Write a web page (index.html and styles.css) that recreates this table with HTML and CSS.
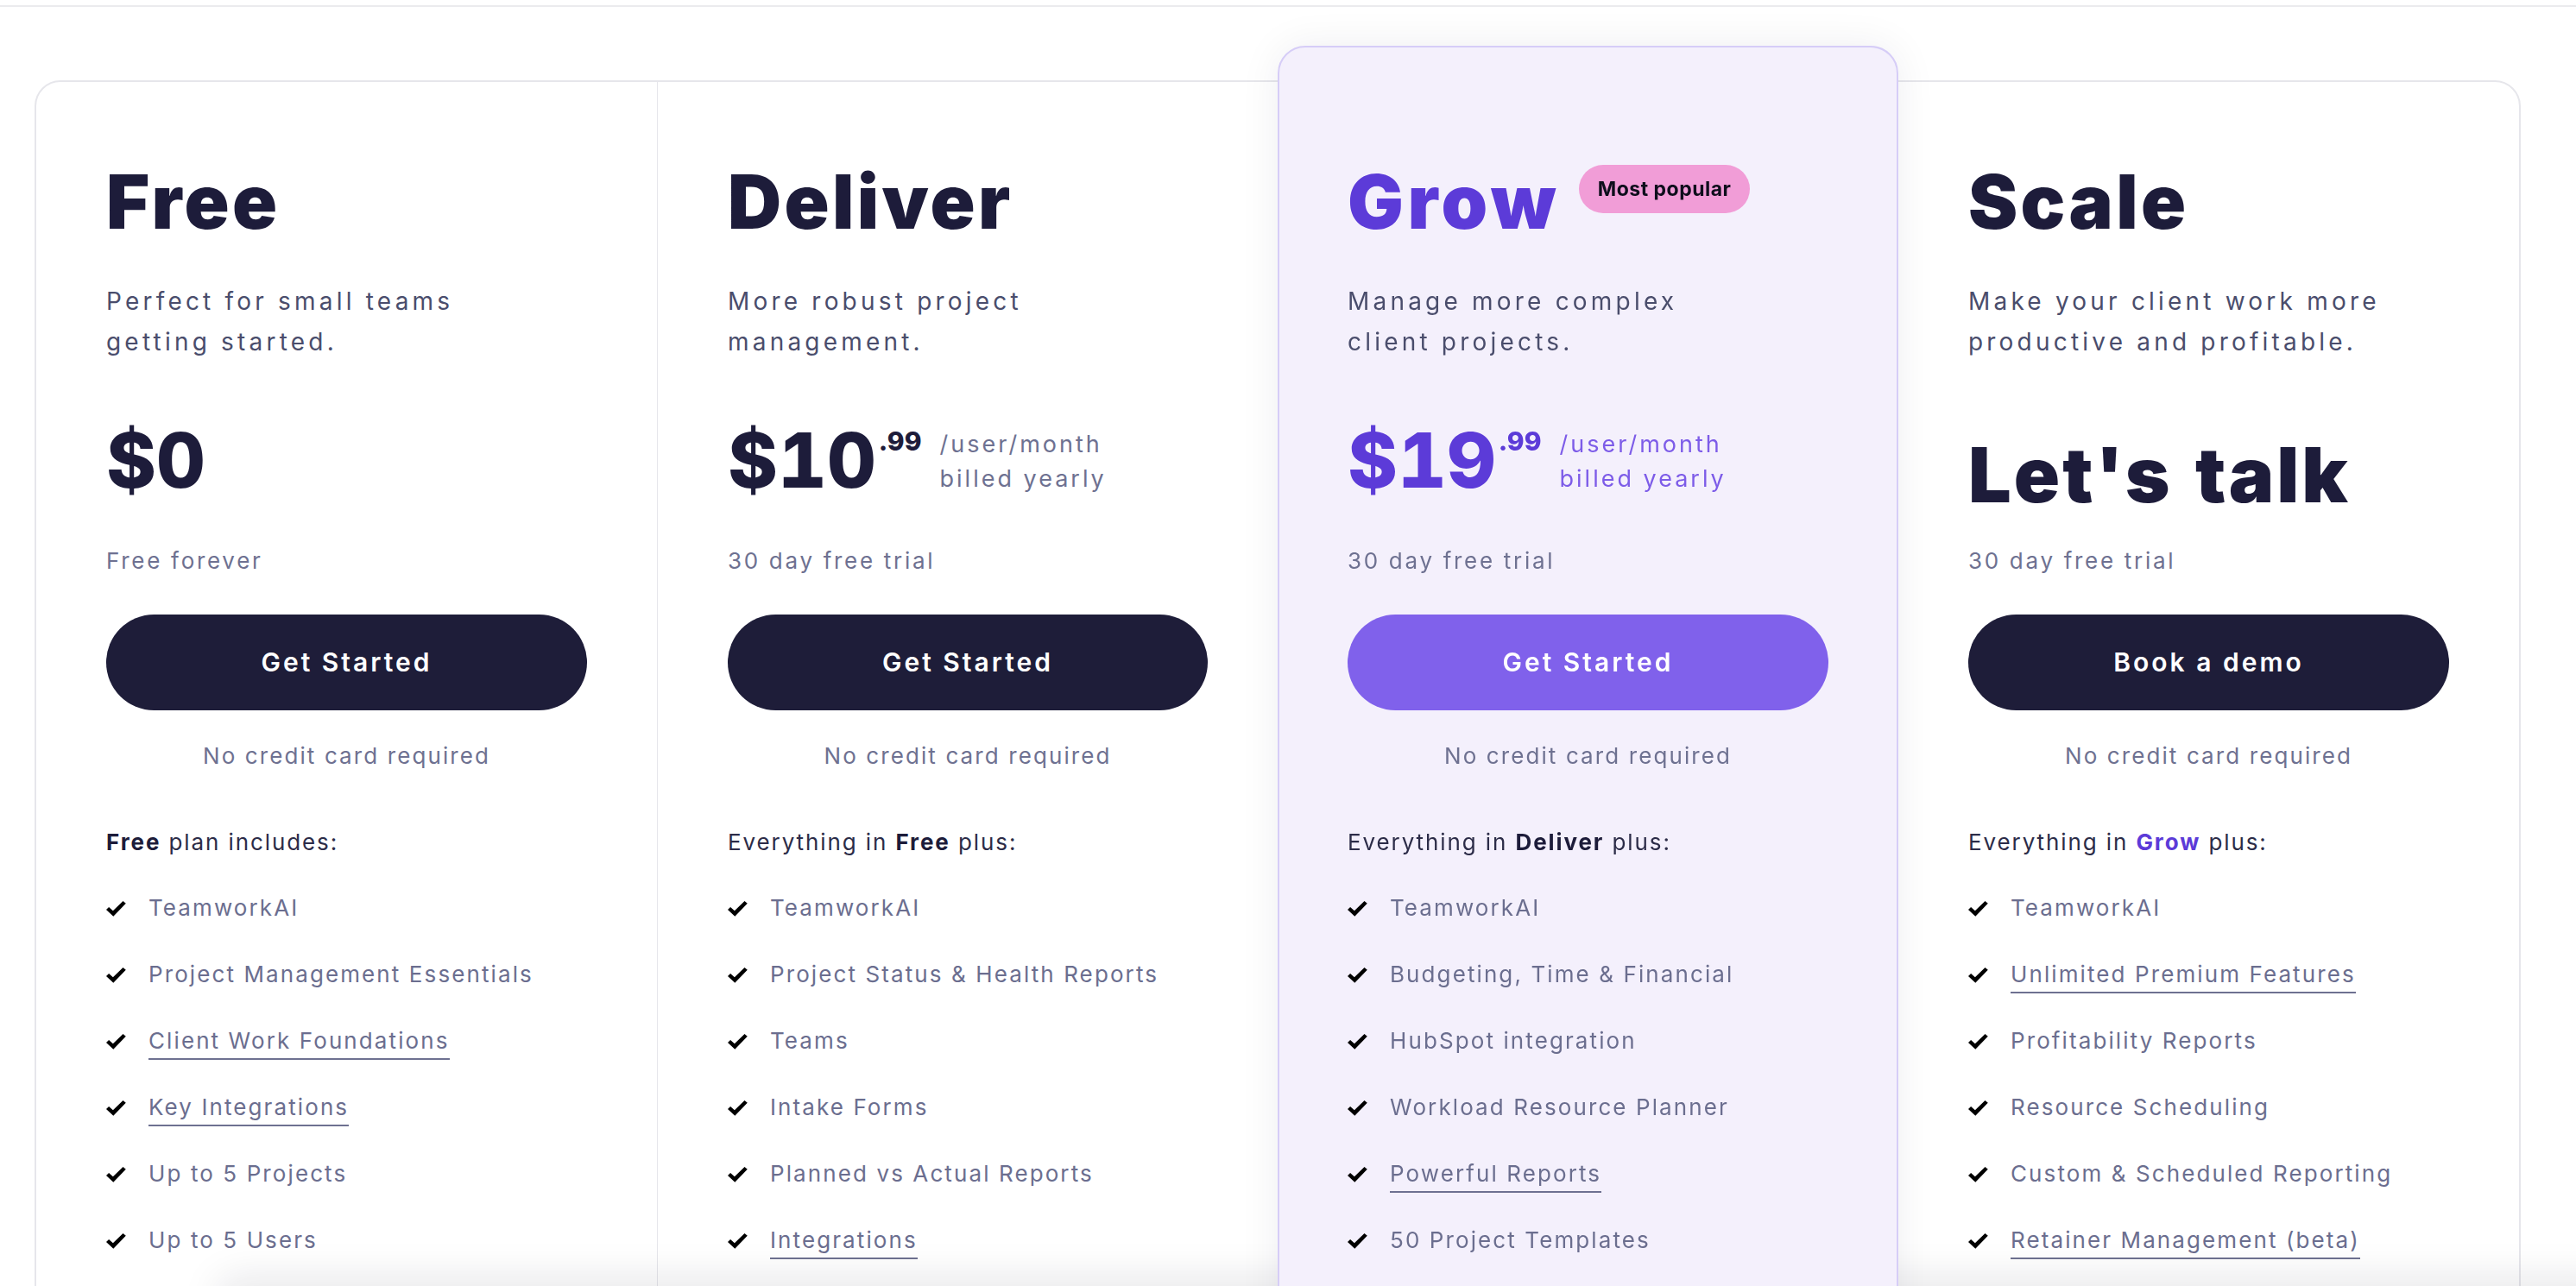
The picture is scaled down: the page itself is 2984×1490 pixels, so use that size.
FILE: index.html
```html
<!DOCTYPE html>
<html lang="en">
<head>
<meta charset="utf-8">
<title>Pricing</title>
<link rel="stylesheet" href="styles.css">
</head>
<body>
<div class="topbar"></div>
<main class="page">
  <section class="plans">
    <article class="plan">
      <div class="plan-head"><h2 class="plan-name">Free</h2></div>
      <p class="plan-desc">Perfect for small teams<br>getting started.</p>
      <div class="price-row"><span class="price">$0</span></div>
      <p class="price-note">Free forever</p>
      <a class="btn btn-dark" href="#">Get Started</a>
      <p class="no-cc">No credit card required</p>
      <p class="includes"><b>Free</b> plan includes:</p>
      <ul class="features">
        <li><svg class="check" viewBox="0 0 23 18"><polygon points="0,9.9 3.1,7 7.9,11.3 19.5,0 22.8,2.8 8.3,17.8"/></svg><span>TeamworkAI</span></li>
        <li><svg class="check" viewBox="0 0 23 18"><polygon points="0,9.9 3.1,7 7.9,11.3 19.5,0 22.8,2.8 8.3,17.8"/></svg><span>Project Management Essentials</span></li>
        <li><svg class="check" viewBox="0 0 23 18"><polygon points="0,9.9 3.1,7 7.9,11.3 19.5,0 22.8,2.8 8.3,17.8"/></svg><span class="link">Client Work Foundations</span></li>
        <li><svg class="check" viewBox="0 0 23 18"><polygon points="0,9.9 3.1,7 7.9,11.3 19.5,0 22.8,2.8 8.3,17.8"/></svg><span class="link">Key Integrations</span></li>
        <li><svg class="check" viewBox="0 0 23 18"><polygon points="0,9.9 3.1,7 7.9,11.3 19.5,0 22.8,2.8 8.3,17.8"/></svg><span>Up to 5 Projects</span></li>
        <li><svg class="check" viewBox="0 0 23 18"><polygon points="0,9.9 3.1,7 7.9,11.3 19.5,0 22.8,2.8 8.3,17.8"/></svg><span>Up to 5 Users</span></li>
      </ul>
    </article>

    <article class="plan plan-divided">
      <div class="plan-head"><h2 class="plan-name">Deliver</h2></div>
      <p class="plan-desc">More robust project<br>management.</p>
      <div class="price-row"><span class="price">$10</span><span class="cents">.99</span><span class="per">/user/month<br>billed yearly</span></div>
      <p class="price-note">30 day free trial</p>
      <a class="btn btn-dark" href="#">Get Started</a>
      <p class="no-cc">No credit card required</p>
      <p class="includes">Everything in <b>Free</b> plus:</p>
      <ul class="features">
        <li><svg class="check" viewBox="0 0 23 18"><polygon points="0,9.9 3.1,7 7.9,11.3 19.5,0 22.8,2.8 8.3,17.8"/></svg><span>TeamworkAI</span></li>
        <li><svg class="check" viewBox="0 0 23 18"><polygon points="0,9.9 3.1,7 7.9,11.3 19.5,0 22.8,2.8 8.3,17.8"/></svg><span>Project Status &amp; Health Reports</span></li>
        <li><svg class="check" viewBox="0 0 23 18"><polygon points="0,9.9 3.1,7 7.9,11.3 19.5,0 22.8,2.8 8.3,17.8"/></svg><span>Teams</span></li>
        <li><svg class="check" viewBox="0 0 23 18"><polygon points="0,9.9 3.1,7 7.9,11.3 19.5,0 22.8,2.8 8.3,17.8"/></svg><span>Intake Forms</span></li>
        <li><svg class="check" viewBox="0 0 23 18"><polygon points="0,9.9 3.1,7 7.9,11.3 19.5,0 22.8,2.8 8.3,17.8"/></svg><span>Planned vs Actual Reports</span></li>
        <li><svg class="check" viewBox="0 0 23 18"><polygon points="0,9.9 3.1,7 7.9,11.3 19.5,0 22.8,2.8 8.3,17.8"/></svg><span class="link">Integrations</span></li>
      </ul>
    </article>

    <article class="plan plan-featured">
      <div class="plan-head"><h2 class="plan-name plan-name-accent">Grow</h2><span class="badge">Most popular</span></div>
      <p class="plan-desc">Manage more complex<br>client projects.</p>
      <div class="price-row price-accent"><span class="price">$19</span><span class="cents">.99</span><span class="per">/user/month<br>billed yearly</span></div>
      <p class="price-note">30 day free trial</p>
      <a class="btn btn-accent" href="#">Get Started</a>
      <p class="no-cc">No credit card required</p>
      <p class="includes">Everything in <b>Deliver</b> plus:</p>
      <ul class="features">
        <li><svg class="check" viewBox="0 0 23 18"><polygon points="0,9.9 3.1,7 7.9,11.3 19.5,0 22.8,2.8 8.3,17.8"/></svg><span>TeamworkAI</span></li>
        <li><svg class="check" viewBox="0 0 23 18"><polygon points="0,9.9 3.1,7 7.9,11.3 19.5,0 22.8,2.8 8.3,17.8"/></svg><span>Budgeting, Time &amp; Financial</span></li>
        <li><svg class="check" viewBox="0 0 23 18"><polygon points="0,9.9 3.1,7 7.9,11.3 19.5,0 22.8,2.8 8.3,17.8"/></svg><span>HubSpot integration</span></li>
        <li><svg class="check" viewBox="0 0 23 18"><polygon points="0,9.9 3.1,7 7.9,11.3 19.5,0 22.8,2.8 8.3,17.8"/></svg><span>Workload Resource Planner</span></li>
        <li><svg class="check" viewBox="0 0 23 18"><polygon points="0,9.9 3.1,7 7.9,11.3 19.5,0 22.8,2.8 8.3,17.8"/></svg><span class="link">Powerful Reports</span></li>
        <li><svg class="check" viewBox="0 0 23 18"><polygon points="0,9.9 3.1,7 7.9,11.3 19.5,0 22.8,2.8 8.3,17.8"/></svg><span>50 Project Templates</span></li>
      </ul>
    </article>

    <article class="plan">
      <div class="plan-head"><h2 class="plan-name">Scale</h2></div>
      <p class="plan-desc">Make your client work more<br>productive and profitable.</p>
      <div class="price-row"><span class="price price-talk">Let's talk</span></div>
      <p class="price-note">30 day free trial</p>
      <a class="btn btn-dark" href="#">Book a demo</a>
      <p class="no-cc">No credit card required</p>
      <p class="includes">Everything in <b class="accent">Grow</b> plus:</p>
      <ul class="features">
        <li><svg class="check" viewBox="0 0 23 18"><polygon points="0,9.9 3.1,7 7.9,11.3 19.5,0 22.8,2.8 8.3,17.8"/></svg><span>TeamworkAI</span></li>
        <li><svg class="check" viewBox="0 0 23 18"><polygon points="0,9.9 3.1,7 7.9,11.3 19.5,0 22.8,2.8 8.3,17.8"/></svg><span class="link">Unlimited Premium Features</span></li>
        <li><svg class="check" viewBox="0 0 23 18"><polygon points="0,9.9 3.1,7 7.9,11.3 19.5,0 22.8,2.8 8.3,17.8"/></svg><span>Profitability Reports</span></li>
        <li><svg class="check" viewBox="0 0 23 18"><polygon points="0,9.9 3.1,7 7.9,11.3 19.5,0 22.8,2.8 8.3,17.8"/></svg><span>Resource Scheduling</span></li>
        <li><svg class="check" viewBox="0 0 23 18"><polygon points="0,9.9 3.1,7 7.9,11.3 19.5,0 22.8,2.8 8.3,17.8"/></svg><span>Custom &amp; Scheduled Reporting</span></li>
        <li><svg class="check" viewBox="0 0 23 18"><polygon points="0,9.9 3.1,7 7.9,11.3 19.5,0 22.8,2.8 8.3,17.8"/></svg><span class="link">Retainer Management (beta)</span></li>
      </ul>
    </article>
  </section>
</main>
<div class="bottom-shade"></div>
</body>
</html>
```

FILE: styles.css
```css
html, body {
  margin: 0;
  height: 100%;
  overflow: hidden;
  background: #ffffff;
}

body {
  font-family: Inter, "Noto Sans", "Liberation Sans", sans-serif;
  color: #1d1c3a;
  -webkit-font-smoothing: antialiased;
}

.topbar {
  height: 6px;
  border-bottom: 2px solid #ebebee;
}

.page {
  padding: 85px 64px 0 40px;
}

.plans {
  display: grid;
  grid-template-columns: repeat(4, 1fr);
  width: 2880px;
  box-sizing: border-box;
  border: 2px solid #e6e6eb;
  border-radius: 30px;
}

.plan {
  padding: 96px 81px 120px 81px;
  min-width: 0;
}

.plan-divided {
  border-left: 1px solid #e6e6eb;
}

.plan-featured {
  position: relative;
  z-index: 1;
  margin-top: -42px;
  margin-bottom: -2px;
  padding-top: 136px;
  padding-left: 79px;
  padding-right: 79px;
  background: #f4f0fc;
  border: 2px solid #d6cdf7;
  border-radius: 32px;
  box-shadow: 0 0 48px rgba(30, 28, 60, 0.07);
}

.plan-head {
  display: flex;
  align-items: flex-start;
}

.plan-name {
  margin: 0;
  font-size: 86px;
  line-height: 86px;
  font-weight: 900;
  letter-spacing: 3.3px;
  color: #1d1c3a;
}

.plan-name-accent {
  color: #5c3bd8;
  letter-spacing: 4.5px;
}

.badge {
  margin-left: 22px;
  height: 56px;
  line-height: 56px;
  padding: 0 22px;
  border-radius: 28px;
  background: #f19dd7;
  color: #0e0e1c;
  font-size: 23px;
  font-weight: 700;
  letter-spacing: 0.5px;
}

.plan-desc {
  margin: 49px 0 0;
  font-size: 28px;
  line-height: 47px;
  letter-spacing: 4.2px;
  color: #4a4d6c;
}

.price-row {
  display: flex;
  align-items: flex-start;
  height: 88px;
  margin-top: 69px;
}

.price {
  font-size: 88px;
  line-height: 88px;
  font-weight: 800;
  font-variant-numeric: tabular-nums;
  letter-spacing: 0;
  color: #1d1c3a;
}

.price-talk {
  margin-top: 17px;
  font-weight: 900;
  letter-spacing: 3px;
}

.cents {
  margin: 8px 0 0 3px;
  font-size: 30px;
  line-height: 29px;
  font-weight: 800;
  color: #1d1c3a;
}

.per {
  margin: 6px 0 0 21px;
  font-size: 27px;
  line-height: 40px;
  letter-spacing: 3px;
  color: #6e7191;
}

.price-accent .price,
.price-accent .cents {
  color: #5c3bd8;
}

.price-accent .per {
  color: #7d5ce8;
}

.price-note {
  margin: 55px 0 0;
  font-size: 26px;
  line-height: 36px;
  letter-spacing: 2.7px;
  color: #6e7191;
}

.btn {
  display: block;
  margin-top: 44px;
  height: 111px;
  line-height: 111px;
  border-radius: 56px;
  text-align: center;
  text-decoration: none;
  color: #ffffff;
  font-size: 30px;
  font-weight: 600;
  letter-spacing: 3px;
}

.btn-dark {
  background: #1e1d39;
}

.btn-accent {
  background: #8061eb;
}

.no-cc {
  margin: 35px 0 0;
  text-align: center;
  font-size: 26px;
  line-height: 36px;
  letter-spacing: 2.1px;
  color: #6e7191;
}

.includes {
  margin: 64px 0 0;
  font-size: 26px;
  line-height: 36px;
  letter-spacing: 1.9px;
  color: #2c2c48;
}

.includes b {
  font-weight: 700;
  color: #1d1c3a;
}

.includes b.accent {
  color: #5c3bd8;
}

.features {
  list-style: none;
  margin: 40px 0 0;
  padding: 0;
  display: flex;
  flex-direction: column;
  gap: 41px;
}

.features li {
  display: flex;
  align-items: center;
  font-size: 26px;
  line-height: 36px;
  letter-spacing: 2.1px;
  color: #6b6e8f;
}

.check {
  width: 23px;
  height: 18px;
  flex: none;
  margin: 2px 26px 0 0;
  fill: #000000;
}

.link {
  padding-bottom: 2px;
  margin-bottom: -4px;
  border-bottom: 2px solid #6e7191;
}

.bottom-shade {
  position: fixed;
  left: 260px;
  right: -40px;
  bottom: -30px;
  height: 30px;
  border-radius: 40px;
  box-shadow: 0 0 45px 10px rgba(20, 20, 40, 0.10);
}
```
